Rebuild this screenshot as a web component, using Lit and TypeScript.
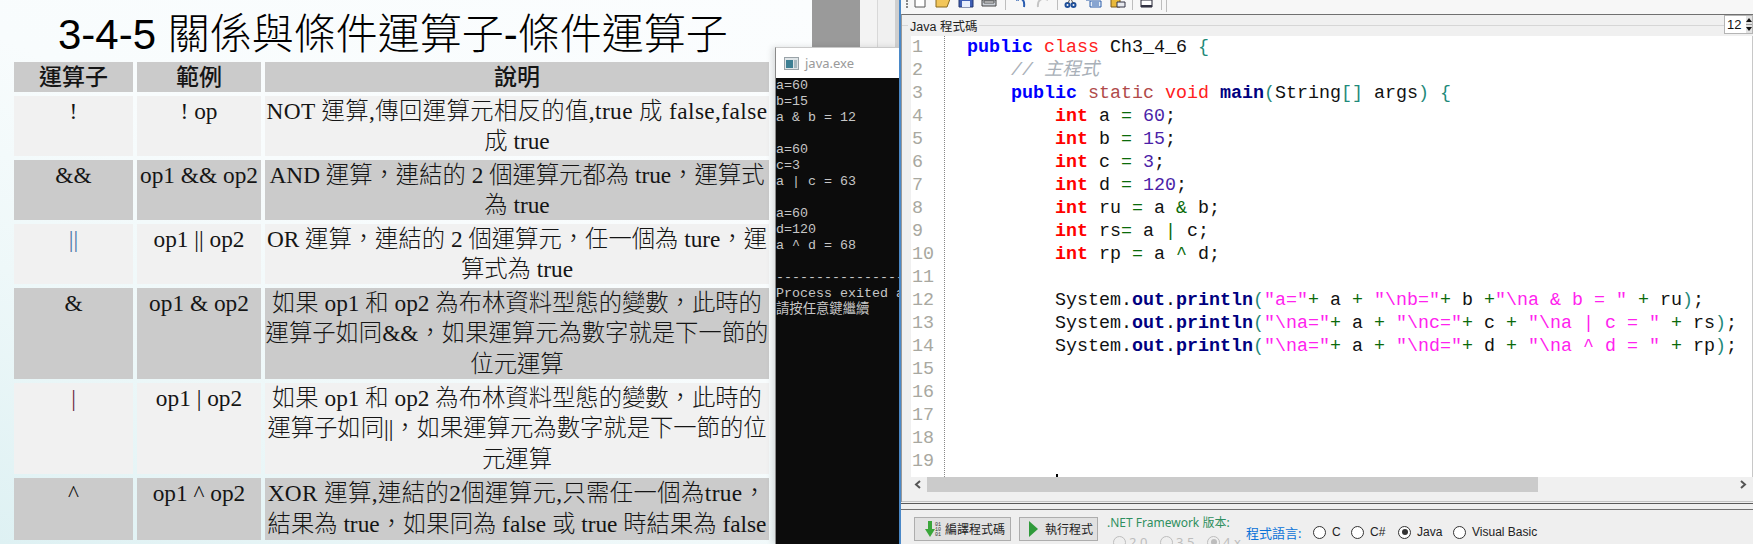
import { LitElement, html, css, svg } from "lit";
import { customElement } from "lit/decorators.js";

const FW = "\uFF0C";
const rows: [string, string, string[], boolean][] = [
  ["!", "! op", ["NOT 運算,傳回運算元相反的值,true 成 false,false", "成 true"], false],
  ["&&", "op1 && op2", [`AND 運算${FW}連結的 2 個運算元都為 true${FW}運算式`, "為 true"], true],
  ["||", "op1 || op2", [`OR 運算${FW}連結的 2 個運算元${FW}任一個為 ture${FW}運`, "算式為 true"], false],
  ["&", "op1 & op2", [`如果 op1 和 op2 為布林資料型態的變數${FW}此時的`, `運算子如同&&${FW}如果運算元為數字就是下一節的`, "位元運算"], true],
  ["|", "op1 | op2", [`如果 op1 和 op2 為布林資料型態的變數${FW}此時的`, `運算子如同||${FW}如果運算元為數字就是下一節的位`, "元運算"], false],
  ["^", "op1 ^ op2", [`XOR 運算,連結的2個運算元,只需任一個為true${FW}`, `結果為 true${FW}如果同為 false 或 true 時結果為 false`], true],
];

const consoleLines = [
  "a=60", "b=15", "a & b = 12", "", "a=60", "c=3", "a | c = 63", "", "a=60", "d=120", "a ^ d = 68", "",
  "----------------", "Process exited a", "請按任意鍵繼續",
];

type Seg = [string, string];
const code: Seg[][] = [
  [["k", "public"], ["", " "], ["r", "class"], ["n", " Ch3_4_6 "], ["b", "{"]],
  [["", "    "], ["c", "// 主程式"]],
  [["", "    "], ["k", "public"], ["", " "], ["m", "static"], ["", " "], ["r", "void"], ["", " "], ["f", "main"], ["b", "("], ["n", "String"], ["b", "[]"], ["n", " args"], ["b", ")"], ["", " "], ["b", "{"]],
  ...([["a", "60"], ["b", "15"], ["c", "3"], ["d", "120"]] as [string, string][]).map(([v, x]): Seg[] => [
    ["", "        "], ["i", "int"], ["n", ` ${v} `], ["o", "="], ["", " "], ["u", x], ["n", ";"],
  ]),
  [["", "        "], ["i", "int"], ["n", " ru "], ["o", "="], ["n", " a "], ["o", "&"], ["n", " b;"]],
  [["", "        "], ["i", "int"], ["n", " rs"], ["o", "="], ["n", " a "], ["o", "|"], ["n", " c;"]],
  [["", "        "], ["i", "int"], ["n", " rp "], ["o", "="], ["n", " a "], ["o", "^"], ["n", " d;"]],
  [],
  [["", "        "], ["n", "System."], ["t", "out"], ["n", "."], ["f", "println"], ["b", "("], ["s", '"a="'], ["o", "+"], ["n", " a "], ["o", "+"], ["", " "], ["s", '"\\nb="'], ["o", "+"], ["n", " b "], ["o", "+"], ["s", '"\\na & b = "'], ["", " "], ["o", "+"], ["n", " ru"], ["b", ")"], ["n", ";"]],
  [["", "        "], ["n", "System."], ["t", "out"], ["n", "."], ["f", "println"], ["b", "("], ["s", '"\\na="'], ["o", "+"], ["n", " a "], ["o", "+"], ["", " "], ["s", '"\\nc="'], ["o", "+"], ["n", " c "], ["o", "+"], ["", " "], ["s", '"\\na | c = "'], ["", " "], ["o", "+"], ["n", " rs"], ["b", ")"], ["n", ";"]],
  [["", "        "], ["n", "System."], ["t", "out"], ["n", "."], ["f", "println"], ["b", "("], ["s", '"\\na="'], ["o", "+"], ["n", " a "], ["o", "+"], ["", " "], ["s", '"\\nd="'], ["o", "+"], ["n", " d "], ["o", "+"], ["", " "], ["s", '"\\na ^ d = "'], ["", " "], ["o", "+"], ["n", " rp"], ["b", ")"], ["n", ";"]],
];

@customElement("app-root")
export class AppRoot extends LitElement {
  static styles = css`
    :host { display: block; width: 1753px; height: 544px; position: relative; overflow: hidden; background: #f0f0f0; }
    .slide {
      width: 812px; height: 544px; box-sizing: border-box; padding: 10px 0 0 14px;
      background: linear-gradient(25deg, #def1f3 0%, #eef8f9 30%, #f8fcfd 55%, #fbfdfe 100%);
    }
    h1 {
      margin: 0; height: 52px; padding-left: 44px; font: 300 42px/50px "Liberation Sans", "Noto Sans CJK TC", sans-serif;
      color: #000; white-space: nowrap;
    }
    .grid {
      display: grid; grid-template-columns: 119px 124px 504px; column-gap: 4px; row-gap: 4px; width: 756px;
      font: 300 23.33px/30px "Liberation Serif", "Noto Sans CJK TC", serif; color: #151515; text-align: center;
    }
    .grid > div { white-space: nowrap; }
    .head { background: #cbcbcb; height: 30px; line-height: 31px; font-family: "Liberation Sans", "Noto Sans CJK TC", sans-serif; font-weight: 500; font-size: 23px; }
    .lt { background: #f1f1f1; }
    .dk { background: #cbcbcb; }
    .h2 { height: 60px; }
    .h3 { height: 91px; line-height: 30.33px; }
    .h4 { height: 62px; line-height: 31px; }
    .desc span { display: block; }
    .tight span:first-child { letter-spacing: .4px; }
    .pipe { color: #6b2a45; }
    .pipes { color: #4a76a8; }
    .gray-band { position: absolute; left: 812px; top: 0; width: 88px; height: 47px; background: linear-gradient(90deg, #9a9a9a 0 48px, #f3f3f3 48px 65px, #d8d8d8 65px 66px, #f0f0f0 66px 83px, #cfcfcf 83px); }
    .console {
      position: absolute; left: 775px; top: 47px; width: 125px; height: 497px; display: flex; flex-direction: column;
      box-shadow: -3px 0 6px rgba(0,0,0,.12); overflow: hidden; border-top: 1px solid #c9c9c9; box-sizing: border-box; border-left: 1px solid #8a8a8a;
    }
    .con-title { flex: 0 0 30px; background: #fff; display: flex; align-items: center; gap: 6px; padding-left: 8px; font: 400 13px "Noto Sans", sans-serif; color: #9a9a9a; }
    .con-body {
      flex: 1; background: #0c0c0c; color: #c6c6c6; font: 400 13.33px/16px "Liberation Mono", "Noto Sans CJK TC", monospace; white-space: pre;
    }
    .con-body div { height: 16px; }
    .win {
      position: absolute; left: 899px; top: 0; width: 854px; height: 544px; display: flex; flex-direction: column;
      background: #f0f0f0; border-left: 2px solid #4a88c7; box-sizing: border-box;
    }
    .tools { height: 14px; flex: none; background: #f7f7f7; display: flex; align-items: flex-start; padding-left: 5px; overflow: hidden; }
    .tools svg { flex: none; width: 16px; height: 16px; margin-top: -8px; margin-left: 7px; }
    .grip { flex: none; width: 0; height: 8px; border-left: 2px dotted #888; margin-right: -3px; }
    .tsep { flex: none; width: 1px; height: 10px; background: #bdbdbd; margin-left: 8px; }
    .tools .m6 { margin-left: 6px; }
    .tools .m8 { margin-left: 8px; }
    .tsep.m5 { margin-left: 5px; }
    .tsep.m6 { margin-left: 6px; }
    .tsep.m4 { margin-left: 4px; height: 12px; }
    .editor { flex: 1; min-height: 0; border-top: 1px solid #707070; border-left: 1px solid #999; display: flex; flex-direction: column; position: relative; }
    .legend {
      height: 21px; flex: none; display: flex; align-items: center; font: 400 12.5px "Liberation Sans", "Noto Sans CJK TC", sans-serif; color: #222;
    }
    .legend s { flex: none; width: 6px; height: 1px; background: #d6d6d6; }
    .legend span { padding: 0 2px; }
    .legend i { flex: 1; height: 1px; background: #d6d6d6; margin-right: 29px; }
    .spin {
      position: absolute; top: 0; right: 0; width: 29px; height: 19px; box-sizing: border-box; border: 1px solid #b5b5b5; background: #fff;
      font: 400 13px/17px "Liberation Sans", sans-serif; padding-left: 2px; color: #111;
    }
    .spin svg { position: absolute; right: 0; top: 0; }
    .code-wrap { flex: 1; min-height: 0; margin-left: 9px; background: #fff; display: flex; overflow: hidden; border-right: 1px solid #c8c8c8; }
    .nums { flex: none; width: 33px; border-right: 1px dotted #888; height: 100%; font: 400 18.33px/23px "Liberation Mono", monospace; color: #a8a8a0; }
    .nums div { height: 23px; padding-left: 1px; }
    .code { padding-left: 22px; font: 400 18.33px/23px "Liberation Mono", "Noto Sans CJK TC", monospace; color: #111; flex: 1; overflow: hidden; position: relative; }
    .code div { height: 23px; white-space: pre; }
    .k { color: #0000ff; font-weight: 700; }
    .r { color: #ff2020; }
    .m { color: #b04a4a; }
    .i { color: #ff0000; font-weight: 700; }
    .f { color: #000080; font-weight: 700; }
    .t { color: #000080; font-weight: 700; }
    .c { color: #a9b0b8; font-style: italic; }
    .s { color: #ff22ee; }
    .u { color: #4b1fa8; }
    .b { color: #1f8a7a; }
    .o { color: #0a6a0a; }
    .n { color: #111; }
    .dot { position: absolute; left: 111px; bottom: 0; width: 2px; height: 3px; background: #000; }
    .hbar { height: 15px; flex: none; margin-left: 9px; display: flex; align-items: center; background: #f0f0f0; margin-right: 1px; }
    .hbar svg { flex: none; width: 16px; height: 15px; }
    .thumb { height: 15px; width: 611px; background: #cbcbcb; }
    .hbar i { flex: 1; }
    .gap1 { height: 9px; flex: none; border-bottom: 1px solid #c4c4c4; }
    .gap2 { flex: none; border-top: 1px solid #5a5a5a; border-bottom: 1px solid #707070; margin-top: 1px; height: 5px; background: #f0f0f0; }
    .bottom { height: 34px; flex: none; display: flex; padding: 7px 0 0 13px; box-sizing: border-box; background: #efefef; font: 400 12px "Noto Sans", "Noto Sans CJK TC", sans-serif; color: #222; overflow: hidden; white-space: nowrap; }
    .btn { height: 24px; flex: none; box-sizing: border-box; border: 1px solid #adadad; background: #e1e1e1; display: flex; align-items: center; font-size: 12px; }
    .b1 { width: 97px; padding-left: 10px; gap: 2px; margin-right: 8px; }
    .b2 { width: 79px; padding-left: 9px; gap: 7px; margin-right: 9px; }
    .fw { width: 139px; flex: none; color: #2f8f60; line-height: 16px; margin-top: -2px; }
    .fw .sub { display: flex; align-items: center; color: #bdbdbd; margin-top: 3px; padding-left: 6px; font-size: 13px; }
    .fw .sub .radio { margin-right: 3px; }
    .fw .sub span { width: 31px; }
    .lang { display: flex; align-items: center; height: 24px; margin-top: 3px; }
    .lang > span { color: #0a72d8; font-size: 13px; width: 67px; flex: none; }
    .opts { display: grid; grid-template-columns: 38px 47px 55px auto; font: 400 12px "Liberation Sans", "Noto Sans CJK TC", sans-serif; }
    .opt { display: flex; align-items: center; gap: 6px; }
    .radio { flex: none; width: 11px; height: 11px; border-radius: 50%; border: 1px solid #333; background: #fff; position: relative; }
    .radio.on::after { content: ""; position: absolute; left: 2.500px; top: 2.500px; width: 6px; height: 6px; border-radius: 50%; background: #333; }
    .radio.dis { border-color: #bdbdbd; background: #efefef; }
    .radio.dis.on::after { background: #bdbdbd; }
  `;

  private radio(label: string, on = false) {
    return html`<div class="opt"><div class="radio ${on ? "on" : ""}"></div><div>${label}</div></div>`;
  }

  render() {
    return html`
      <div class="slide">
        <h1>3-4-5 關係與條件運算子-條件運算子</h1>
        <div class="grid">
          <div class="head">運算子</div><div class="head">範例</div><div class="head">說明</div>
          ${rows.map(([a, b, d, dark]) => {
            const cls = (dark ? "dk " : "lt ") + (d.length === 3 ? "h3" : a === "^" ? "h4" : "h2");
            const tight = a === "!" || a === "^" ? "tight" : "";
            return html`
              <div class="${cls} ${a === "|" ? "pipe" : a === "||" ? "pipes" : ""}">${a}</div>
              <div class=${cls}>${b}</div>
              <div class="${cls} desc ${tight}">${d.map((l) => html`<span>${l}</span>`)}</div>`;
          })}
        </div>
      </div>
      <div class="gray-band"></div>
      <div class="console">
        <div class="con-title">
          <svg width="15" height="13" viewBox="0 0 15 13"><rect x=".5" y=".5" width="14" height="12" fill="#dfe5e8" stroke="#9aa3a8"/><rect x="2" y="3" width="7" height="8" fill="#3d7f93"/><rect x="10" y="3" width="3" height="8" fill="#a7b9c0"/></svg>
          <span>java.exe</span>
        </div>
        <div class="con-body">${consoleLines.map((l) => html`<div>${l}</div>`)}</div>
      </div>
      <div class="win">
        <div class="tools">
          <span class="grip"></span>
          <svg viewBox="0 0 16 16"><path d="M3 1h7l3 3v11H3z" fill="#fff" stroke="#555"/></svg>
          <svg viewBox="0 0 16 16"><path d="M1 5h5l1 2h8l-3 8H1z" fill="#f2c65a" stroke="#8a6a1e"/></svg>
          <svg viewBox="0 0 16 16"><path d="M1 1h14v14H1z" fill="#3f5fb5" stroke="#23366e"/><path d="M4 9h8v6H4z" fill="#e8eefc"/></svg>
          <svg viewBox="0 0 16 16"><path d="M1 8h14v6H1z" fill="#c9ced4" stroke="#444"/><path d="M3 9h10v2H3z" fill="#fff" stroke="#555"/></svg>
          <span class="tsep"></span>
          <svg viewBox="0 0 16 16"><path d="M3 8c6-3 9 0 8 7" fill="none" stroke="#2a5db0" stroke-width="2"/><path d="M1 6l5-2v5z" fill="#2a5db0"/></svg>
          <svg viewBox="0 0 16 16"><path d="M12 8C6 5 1 8 2 15" fill="none" stroke="#c4c4c4" stroke-width="2"/></svg>
          <span class="tsep m5"></span>
          <svg class="m6" viewBox="0 0 16 16"><circle cx="3.500" cy="13" r="2" fill="none" stroke="#1f4f9a" stroke-width="2"/><circle cx="9.500" cy="13" r="2" fill="none" stroke="#1f4f9a" stroke-width="2"/><path d="M4 11l4-8M9 11L5 3" stroke="#555"/></svg>
          <svg class="m6" viewBox="0 0 16 16"><path d="M4 9h11v6H4z" fill="#e4edf8" stroke="#2a5da9"/><path d="M6 11h7M6 13h7" stroke="#2a5da9"/><path d="M0 8h4" stroke="#2a5da9"/></svg>
          <svg class="m8" viewBox="0 0 16 16"><path d="M1 6h9v9H1z" fill="#e8b83a" stroke="#7a5a1a"/><path d="M7 10h8v5H7z" fill="#e8eaef" stroke="#334"/></svg>
          <span class="tsep m6"></span>
          <svg class="m6" viewBox="0 0 16 16"><path d="M2 8h11v7H2z" fill="#fff" stroke="#223"/><path d="M2 13h11v2H2z" fill="#334"/></svg>
          <span class="tsep m6"></span><span class="tsep m4"></span>
        </div>
        <div class="editor">
          <div class="legend"><s></s><span>Java 程式碼</span><i></i></div>
          <div class="spin">12<svg width="6" height="17" viewBox="0 0 6 17"><rect width="6" height="17" fill="#e2e2e2"/><path d="M0 8.500h6" stroke="#999"/><path d="M3 2l3 4H0zM3 15l3-4H0z" fill="#111"/></svg></div>
          <div class="code-wrap">
            <div class="nums">${Array.from({ length: 19 }, (_, i) => html`<div>${i + 1}</div>`)}</div>
            <div class="code">${code.map((line) => html`<div>${line.map(([c, t]) => (c ? html`<span class=${c}>${t}</span>` : t))}</div>`)}<span class="dot"></span></div>
          </div>
          <div class="hbar">
            <svg viewBox="0 0 16 15"><path d="M9 4L5 7.500 9 11" fill="none" stroke="#555" stroke-width="2"/></svg>
            <div class="thumb"></div>
            <i></i>
            <svg viewBox="0 0 16 15"><path d="M5 4l4 3.500L5 11" fill="none" stroke="#555" stroke-width="2"/></svg>
          </div>
          <div class="gap1"></div>
        </div>
        <div class="gap2"></div>
        <div class="bottom">
          <div class="btn b1">
            <svg width="18" height="18" viewBox="0 0 18 18"><path d="M3 1h4v8h3l-5 8-5-8h3z" fill="#3aa63a"/><text x="10" y="6" font-size="5" fill="#333" font-family="Liberation Mono">01</text><text x="10" y="11" font-size="5" fill="#333" font-family="Liberation Mono">10</text><text x="10" y="16" font-size="5" fill="#333" font-family="Liberation Mono">01</text></svg>
            <span>編譯程式碼</span>
          </div>
          <div class="btn b2">
            <svg width="9" height="16" viewBox="0 0 9 16"><path d="M0 0l9 8-9 8z" fill="#2f9a3a"/></svg>
            <span>執行程式</span>
          </div>
          <div class="fw">
            .NET Framework 版本:
            <div class="sub"><div class="radio dis"></div><span>2.0</span><div class="radio dis"></div><span>3.5</span><div class="radio dis on"></div>4.x</div>
          </div>
          <div class="lang">
            <span>程式語言:</span>
            <div class="opts">${this.radio("C")}${this.radio("C#")}${this.radio("Java", true)}${this.radio("Visual Basic")}</div>
          </div>
        </div>
      </div>
    `;
  }
}
